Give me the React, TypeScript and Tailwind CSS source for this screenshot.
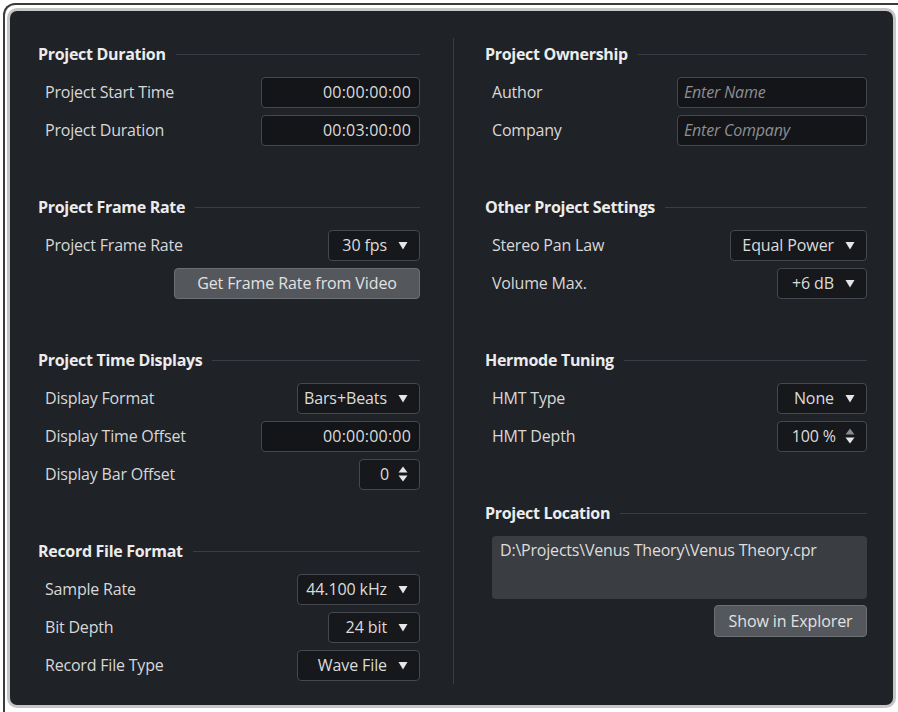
import React from "react";

const font = { fontFamily: '"Open Sans", "Noto Sans", sans-serif' };

function Tri() {
  return (
    <svg width="10" height="9" viewBox="0 0 10 9">
      <path d="M0.5 1 L9.5 1 L5 8.5 Z" fill="#e6e6e6" />
    </svg>
  );
}

function Spin({ dimUp = false }: { dimUp?: boolean }) {
  return (
    <svg width="10" height="16" viewBox="0 0 10 16">
      <path d="M5 0.5 L9.5 6.5 L0.5 6.5 Z" fill={dimUp ? "#8a8d92" : "#e6e6e6"} />
      <path d="M0.5 9.5 L9.5 9.5 L5 15.5 Z" fill="#e6e6e6" />
    </svg>
  );
}

function Header({ title }: { title: string }) {
  return (
    <div className="h-[38px] flex items-center">
      <span className="text-[16px] font-bold text-[#ececec] whitespace-nowrap tracking-[-0.3px]">{title}</span>
      <div className="flex-1 h-px bg-[#3a3d43] ml-[10px]" />
    </div>
  );
}

function Row({ label, children }: { label: string; children: React.ReactNode }) {
  return (
    <div className="h-[38px] flex items-center justify-between">
      <span className="pl-[7px] text-[16px] text-[#d8d8d8] whitespace-nowrap tracking-[-0.2px]">{label}</span>
      {children}
    </div>
  );
}

function Field({ value, w }: { value: string; w: string }) {
  return (
    <div
      className={`${w} h-[31px] bg-[#131518] border border-[#45484e] rounded-[4px] flex items-center justify-end pr-[8px] text-[16px] tracking-[0.2px] text-[#dcdcdc]`}
    >
      {value}
    </div>
  );
}

function Placeholder({ value }: { value: string }) {
  return (
    <div className="w-[190px] h-[31px] bg-[#131518] border border-[#45484e] rounded-[4px] flex items-center pl-[6px] text-[16px] tracking-[-0.2px] italic text-[#8c8f94]">
      {value}
    </div>
  );
}

function Drop({ value, w }: { value: string; w: string }) {
  return (
    <div
      className={`${w} h-[31px] bg-[#16181b] border border-[#45484e] rounded-[4px] flex items-center justify-end gap-[11px] pr-[11px] text-[16px] tracking-[-0.1px] text-[#dcdcdc]`}
    >
      <span>{value}</span>
      <Tri />
    </div>
  );
}

function Spinner({ value, w, dimUp = false }: { value: string; w: string; dimUp?: boolean }) {
  return (
    <div
      className={`${w} h-[31px] bg-[#16181b] border border-[#45484e] rounded-[4px] flex items-center justify-end gap-[9px] pr-[11px] text-[16px] tracking-[-0.1px] text-[#dcdcdc]`}
    >
      <span>{value}</span>
      <Spin dimUp={dimUp} />
    </div>
  );
}

function Btn({ label, w, h }: { label: string; w: string; h: string }) {
  return (
    <div
      className={`${w} ${h} bg-[#54575c] border border-[#6c6f74] rounded-[4px] flex items-center justify-center text-[16px] tracking-[-0.1px] text-[#e2e2e2]`}
    >
      {label}
    </div>
  );
}

export default function App() {
  return (
    <div className="w-[898px] h-[712px] bg-white pt-[3px] pl-[3px]" style={font}>
      <div className="w-[895px] h-[709px] border-t-[2px] border-l-[2px] border-[#3c3c3c] rounded-tl-[12px] pt-[3px] pl-[2px]">
        <div className="w-[889px] h-[700px] rounded-[10px] border-[3px] border-[#c6c6c6] bg-[#1f2227] pt-[24px] pl-[28px]">
          <div className="flex items-start">
            {/* Left column */}
            <div className="w-[382px] flex flex-col">
              <Header title="Project Duration" />
              <Row label="Project Start Time">
                <Field value="00:00:00:00" w="w-[159px]" />
              </Row>
              <Row label="Project Duration">
                <Field value="00:03:00:00" w="w-[159px]" />
              </Row>

              <div className="h-[39px]" />
              <Header title="Project Frame Rate" />
              <Row label="Project Frame Rate">
                <Drop value="30 fps" w="w-[92px]" />
              </Row>
              <div className="h-[38px] flex items-center justify-end">
                <Btn label="Get Frame Rate from Video" w="w-[246px]" h="h-[31px]" />
              </div>

              <div className="h-[39px]" />
              <Header title="Project Time Displays" />
              <Row label="Display Format">
                <Drop value="Bars+Beats" w="w-[123px]" />
              </Row>
              <Row label="Display Time Offset">
                <Field value="00:00:00:00" w="w-[159px]" />
              </Row>
              <Row label="Display Bar Offset">
                <Spinner value="0" w="w-[61px]" />
              </Row>

              <div className="h-[39px]" />
              <Header title="Record File Format" />
              <Row label="Sample Rate">
                <Drop value="44.100 kHz" w="w-[123px]" />
              </Row>
              <Row label="Bit Depth">
                <Drop value="24 bit" w="w-[92px]" />
              </Row>
              <Row label="Record File Type">
                <Drop value="Wave File" w="w-[123px]" />
              </Row>
            </div>

            {/* Divider */}
            <div className="w-px h-[646px] bg-[#3a3d43] ml-[33px] mt-[3px]" />

            {/* Right column */}
            <div className="w-[382px] flex flex-col ml-[31px]">
              <Header title="Project Ownership" />
              <Row label="Author">
                <Placeholder value="Enter Name" />
              </Row>
              <Row label="Company">
                <Placeholder value="Enter Company" />
              </Row>

              <div className="h-[39px]" />
              <Header title="Other Project Settings" />
              <Row label="Stereo Pan Law">
                <Drop value="Equal Power" w="w-[137px]" />
              </Row>
              <Row label="Volume Max.">
                <Drop value="+6 dB" w="w-[90px]" />
              </Row>

              <div className="h-[39px]" />
              <Header title="Hermode Tuning" />
              <Row label="HMT Type">
                <Drop value="None" w="w-[90px]" />
              </Row>
              <Row label="HMT Depth">
                <Spinner value="100 %" w="w-[90px]" dimUp />
              </Row>

              <div className="h-[39px]" />
              <Header title="Project Location" />
              <div className="ml-[7px] mt-[4px] h-[63px] bg-[#3a3d42] rounded-[4px] px-[8px] pt-[2px] text-[16px] tracking-[-0.2px] text-[#dedede]">
                D:\Projects\Venus Theory\Venus Theory.cpr
              </div>
              <div className="flex justify-end mt-[6px]">
                <Btn label="Show in Explorer" w="w-[153px]" h="h-[32px]" />
              </div>
            </div>
          </div>
        </div>
      </div>
    </div>
  );
}
